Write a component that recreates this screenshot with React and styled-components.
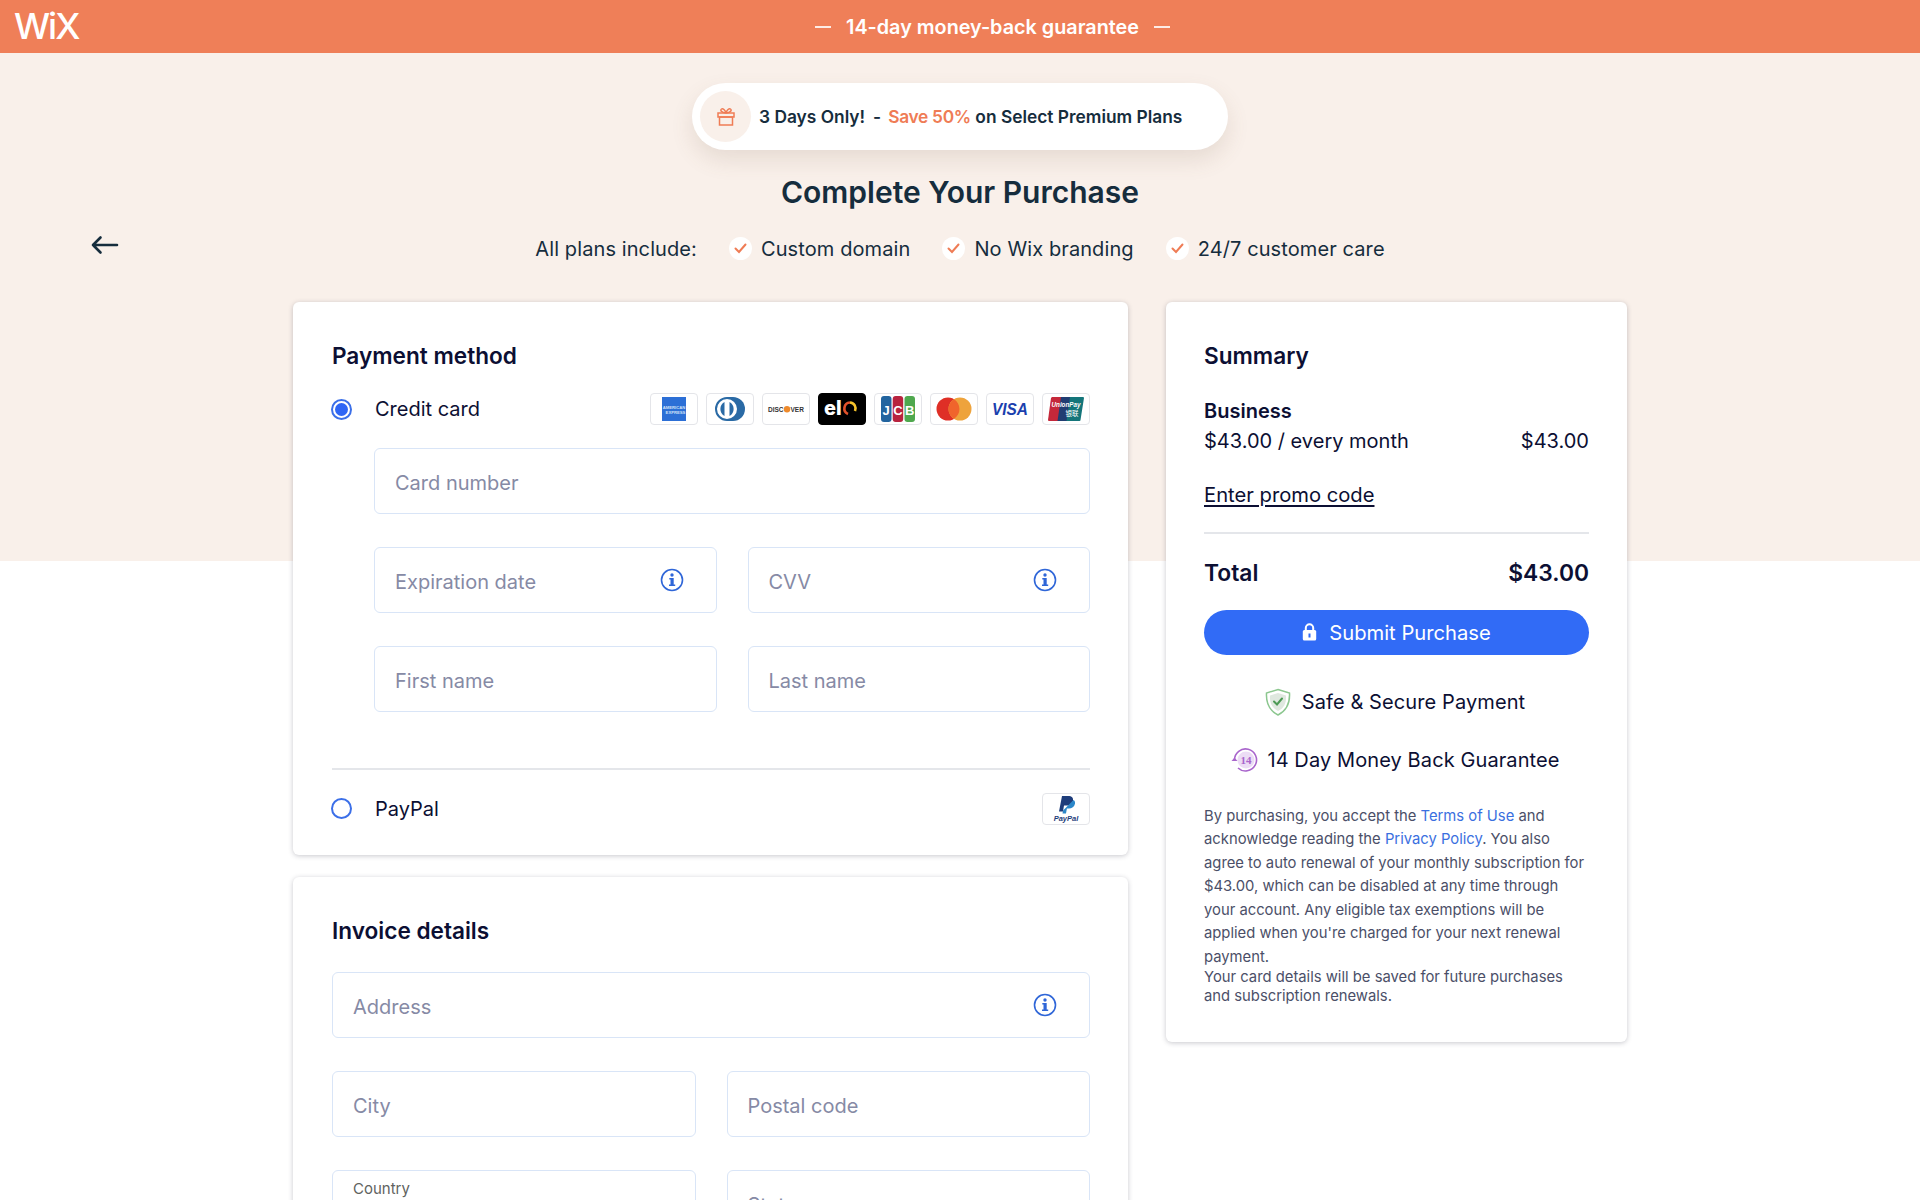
import React from 'react';
import styled, { createGlobalStyle } from 'styled-components';

const GlobalStyle = createGlobalStyle`
  html, body {
    margin: 0;
    padding: 0;
    background: #fff;
  }
  * {
    box-sizing: border-box;
  }
`;

const FONT = `Inter, "Noto Sans", "Liberation Sans", sans-serif`;

const Page = styled.div`
  height: 1200px;
  overflow: hidden;
  font-family: ${FONT};
  color: #162d3d;
  background: linear-gradient(#f9f0ea 561px, #fff 561px);
`;

const TopBar = styled.header`
  height: 53px;
  background: #ef7f58;
  color: #fff;
  display: grid;
  grid-template-columns: 93px 1fr;
  align-items: center;
`;

const Logo = styled.div`
  padding-left: 14px;
  font-size: 36px;
  font-weight: 500;
  letter-spacing: -2px;
  line-height: 53px;
`;

const Guarantee = styled.div`
  display: flex;
  justify-content: center;
  align-items: center;
  gap: 15px;
  padding-right: 28px;
  font-size: 19.800px;
  font-weight: 600;
`;

const Dash = styled.span`
  width: 16px;
  height: 2px;
  background: #fff;
  opacity: 0.85;
`;

const Hero = styled.section`
  display: flex;
  flex-direction: column;
  align-items: center;
`;

const Promo = styled.div`
  margin-top: 30px;
  width: 536px;
  height: 67px;
  border-radius: 34px;
  background: #fff;
  box-shadow: 0 10px 22px rgba(120, 90, 70, 0.14);
  display: flex;
  align-items: center;
  gap: 8px;
  padding-left: 8px;
  font-size: 17.350px;
  font-weight: 600;
  white-space: pre;
`;

const GiftCircle = styled.span`
  width: 51px;
  height: 51px;
  border-radius: 50%;
  background: #f9f0ea;
  display: flex;
  align-items: center;
  justify-content: center;
`;

const Separator = styled.span`
  margin: 0 7px 0 8px;
`;

const Save = styled.span`
  color: #ef7c55;
  letter-spacing: -0.3px;
`;

const Title = styled.h1`
  margin: 24px 0 0;
  font-size: 30px;
  line-height: 36px;
  font-weight: 600;
`;

const Plans = styled.div`
  width: 100%;
  margin-top: 24px;
  display: grid;
  grid-template-columns: 1fr auto 1fr;
  align-items: center;
`;

const BackArrow = styled.span`
  padding-left: 91px;
  display: flex;
  margin-top: -8px;
`;

const PlanList = styled.div`
  display: flex;
  align-items: center;
  font-size: 20px;
  line-height: 30px;
  letter-spacing: 0.1px;
`;

const PlanItem = styled.div`
  margin-left: 32px;
  display: flex;
  align-items: center;
  gap: 9px;
`;

const CheckCircle = styled.span`
  width: 23px;
  height: 23px;
  border-radius: 50%;
  background: #fff;
  display: flex;
  align-items: center;
  justify-content: center;
  margin-top: -2px;
`;

const Columns = styled.main`
  margin-top: 38px;
  display: flex;
  justify-content: center;
  align-items: flex-start;
  gap: 38px;
`;

const LeftColumn = styled.div`
  width: 835px;
  display: flex;
  flex-direction: column;
  gap: 22px;
`;

const Card = styled.section`
  background: #fff;
  border-radius: 6px;
  box-shadow: 0 1px 5px rgba(40, 40, 60, 0.25);
  padding: 40px 38px ${(p) => p.$bottom || 30}px 39px;
`;

const SummaryCard = styled(Card)`
  width: 461px;
  padding-left: 38px;
`;

const CardTitle = styled.h2`
  margin: 0;
  font-size: 22.600px;
  line-height: 28px;
  font-weight: 600;
  color: #0c0f33;
`;

const MethodRow = styled.div`
  display: flex;
  align-items: center;
  margin-top: ${(p) => p.$top}px;
  height: 32px;
  font-size: 20px;
  color: #0c0f33;
`;

const Radio = styled.span`
  width: 21px;
  height: 21px;
  border-radius: 50%;
  border: 2px solid #3b6fe8;
  padding: 2px;
  margin: 0 23px 0 -1px;
  background-clip: content-box;
  background-color: ${(p) => (p.$checked ? '#2f66f5' : 'transparent')};
`;

const Badges = styled.div`
  margin-left: auto;
  display: flex;
  gap: 8px;
`;

const Badge = styled.span`
  width: 48px;
  height: 32px;
  border-radius: 4px;
  border: 1px solid ${(p) => (p.$dark ? '#000' : '#e4e5e9')};
  background: ${(p) => (p.$dark ? '#000' : '#fff')};
  overflow: hidden;
  display: flex;
  align-items: center;
  justify-content: center;
`;

const Fields = styled.div`
  display: flex;
  flex-direction: column;
  gap: 33px;
  margin-top: ${(p) => p.$top}px;
  padding-left: ${(p) => p.$indent || 0}px;
`;

const FieldRow = styled.div`
  display: grid;
  grid-template-columns: minmax(0, 1fr) minmax(0, 1fr);
  gap: 31px;
`;

const Field = styled.label`
  height: 66px;
  border: 1.5px solid #d9e5f7;
  border-radius: 6px;
  background: #fff;
  display: flex;
  align-items: center;
  padding: 4px 32px 0 20px;
`;

const FieldInput = styled.input`
  flex: 1;
  min-width: 0;
  border: 0;
  outline: 0;
  padding: 0;
  background: transparent;
  font-family: ${FONT};
  font-size: 20px;
  color: #0c0f33;

  &::placeholder {
    color: #868aa5;
    opacity: 1;
  }
`;

const SelectField = styled(Field)`
  align-items: flex-start;
  padding-top: 8px;
`;

const SmallLabel = styled.span`
  font-size: 15px;
  line-height: 20px;
  color: #5f6360;
`;

const Divider = styled.hr`
  border: 0;
  height: 1.5px;
  background: #e4e6ea;
  margin: ${(p) => p.$top}px 0 0;
`;

const PlanName = styled.div`
  margin-top: 28px;
  font-size: 20px;
  line-height: 26px;
  font-weight: 600;
  color: #0c0f33;
`;

const PriceRow = styled.div`
  margin-top: 4px;
  display: flex;
  justify-content: space-between;
  font-size: 20px;
  line-height: 26px;
  color: #0c0f33;
`;

const PromoLink = styled.a`
  display: block;
  margin-top: 28px;
  font-size: 20.200px;
  line-height: 26px;
  color: #0c0f33;
  text-decoration: underline;
  text-underline-offset: 3px;
`;

const TotalRow = styled.div`
  margin-top: 23px;
  display: flex;
  justify-content: space-between;
  font-size: 22.800px;
  line-height: 32px;
  font-weight: 600;
  color: #0c0f33;
`;

const SubmitButton = styled.button`
  margin-top: 21px;
  width: 100%;
  height: 45px;
  border: 0;
  border-radius: 23px;
  background: #316bf6;
  color: #fff;
  font-family: ${FONT};
  font-size: 20.200px;
  display: flex;
  align-items: center;
  justify-content: center;
  gap: 12px;
`;

const TrustRow = styled.div`
  margin-top: ${(p) => p.$top}px;
  padding-right: 3px;
  display: flex;
  align-items: center;
  justify-content: center;
  gap: ${(p) => p.$gap}px;
  font-size: 20px;
  letter-spacing: 0.1px;
  line-height: 28px;
  color: #0c0f33;
`;

const Legal = styled.p`
  margin: ${(p) => p.$top || 0}px 0 0;
  font-size: 14.800px;
  line-height: ${(p) => p.$line}px;
  color: #4b4f68;
`;

const LegalLink = styled.a`
  color: #3a6fe0;
`;

function GiftIcon() {
  return (
    <svg width="20" height="20" viewBox="0 0 20 20" fill="none" stroke="#ef7c55" strokeWidth="1.500">
      <rect x="2" y="6" width="16" height="4" />
      <rect x="3.500" y="10" width="13" height="8" />
      <path d="M10 6c-1-3-3-5-4.500-4S5 5.500 10 6zM10 6c1-3 3-5 4.500-4S15 5.500 10 6z" />
    </svg>
  );
}

function CheckIcon() {
  return (
    <svg width="13" height="11" viewBox="0 0 13 11" fill="none" stroke="#ef7c55" strokeWidth="2" strokeLinecap="round">
      <path d="M1.500 5.500l3.500 3.500 6.500-7.500" />
    </svg>
  );
}

function ArrowIcon() {
  return (
    <svg width="28" height="20" viewBox="0 0 28 20" fill="none" stroke="#162d3d" strokeWidth="2.600" strokeLinecap="round" strokeLinejoin="round">
      <path d="M26 10H2M9.500 2.500L2 10l7.500 7.500" />
    </svg>
  );
}

function InfoIcon() {
  return (
    <svg width="24" height="24" viewBox="0 0 24 24" fill="none" style={{ marginTop: -4 }}>
      <circle cx="12" cy="12" r="10.500" stroke="#2f66d8" strokeWidth="1.600" />
      <circle cx="12" cy="7" r="1.700" fill="#2f66d8" />
      <path d="M9.300 10h4.400v6.400h1.500V18H9v-1.600h1.500v-4.800H9.300z" fill="#2f66d8" />
    </svg>
  );
}

function LockIcon() {
  return (
    <svg width="15" height="18" viewBox="0 0 15 18">
      <path d="M3.800 8V5a3.700 3.700 0 0 1 7.400 0v3" fill="none" stroke="#fff" strokeWidth="2" />
      <rect x="0.800" y="7" width="13.400" height="10.500" rx="1.500" fill="#fff" />
      <rect x="6.500" y="10.500" width="2" height="4" fill="#316bf6" />
    </svg>
  );
}

function ShieldIcon() {
  return (
    <svg width="26" height="28" viewBox="0 0 26 28">
      <path d="M13 1.500L24.500 5c.5 9-1.500 17-11.500 22C3 22 1 14 1.500 5z" fill="#fff" stroke="#8cc78f" strokeWidth="1.500" />
      <path d="M13 5l8 2.500c.3 6.500-1 12-8 15.500-7-3.500-8.300-9-8-15.500z" fill="#dfe8df" />
      <path d="M9 13.500l3 3 5-6" fill="none" stroke="#4d9a55" strokeWidth="2" strokeLinecap="round" />
    </svg>
  );
}

function RefundIcon() {
  return (
    <svg width="28" height="26" viewBox="0 0 28 26">
      <circle cx="16" cy="13" r="8.500" fill="#ecdcf5" />
      <path d="M4.500 13A11 11 0 1 1 8 21" fill="none" stroke="#a965cc" strokeWidth="1.600" />
      <path d="M1.500 14L4.500 10.500 7.500 14z" fill="#a965cc" />
      <text x="16" y="17" textAnchor="middle" fontFamily="Liberation Serif, serif" fontSize="11" fontWeight="700" fill="#a965cc">14</text>
    </svg>
  );
}

function AmexLogo() {
  return (
    <svg width="24" height="24" viewBox="0 0 24 24">
      <rect width="24" height="24" fill="#2c6fd6" />
      <text x="12" y="11.500" textAnchor="middle" fontFamily="Liberation Sans, sans-serif" fontSize="4.200" fontWeight="700" fill="#cfe0f7">AMERICAN</text>
      <text x="13.500" y="16.500" textAnchor="middle" fontFamily="Liberation Sans, sans-serif" fontSize="4.200" fontWeight="700" fill="#cfe0f7">EXPRESS</text>
    </svg>
  );
}

function DinersLogo() {
  return (
    <svg width="34" height="24" viewBox="0 0 34 24">
      <path d="M14 0h6a12 12 0 0 1 0 24h-6z" fill="#2a6aa5" />
      <circle cx="14" cy="12" r="11" fill="#fff" stroke="#2a6aa5" strokeWidth="2" />
      <path d="M11.500 5a8 8 0 0 0 0 14zM16.500 5a8 8 0 0 1 0 14z" fill="#2a6aa5" />
    </svg>
  );
}

function DiscoverLogo() {
  return (
    <svg width="38" height="12" viewBox="0 0 38 12">
      <text x="1" y="8.500" fontFamily="Liberation Sans, sans-serif" fontSize="6.500" fontWeight="700" fill="#333">DISC</text>
      <circle cx="20" cy="6.200" r="3.200" fill="#ee8a2c" />
      <text x="23.500" y="8.500" fontFamily="Liberation Sans, sans-serif" fontSize="6.500" fontWeight="700" fill="#333">VER</text>
    </svg>
  );
}

function EloLogo() {
  return (
    <svg width="40" height="24" viewBox="0 0 40 24" fill="none">
      <text x="2" y="18" fontFamily="Inter, sans-serif" fontSize="20" fontWeight="800" fill="#fff">el</text>
      <path d="M26 17a6 6 0 0 1 2-11.500" stroke="#e2512b" strokeWidth="2.600" />
      <path d="M28 5.500a6 6 0 0 1 5 8.500" stroke="#f6c32c" strokeWidth="2.600" />
    </svg>
  );
}

function JcbLogo() {
  return (
    <svg width="34" height="26" viewBox="0 0 34 26">
      <rect x="0" width="10.500" height="26" rx="3" fill="#22649f" />
      <rect x="11.700" width="10.500" height="26" rx="3" fill="#b8233f" />
      <rect x="23.500" width="10.500" height="26" rx="3" fill="#4fa84e" />
      <text x="5.200" y="19" textAnchor="middle" fontFamily="Liberation Sans, sans-serif" fontSize="13" fontWeight="700" fill="#fff">J</text>
      <text x="17" y="19" textAnchor="middle" fontFamily="Liberation Sans, sans-serif" fontSize="13" fontWeight="700" fill="#fff">C</text>
      <text x="28.700" y="19" textAnchor="middle" fontFamily="Liberation Sans, sans-serif" fontSize="13" fontWeight="700" fill="#fff">B</text>
    </svg>
  );
}

function MastercardLogo() {
  return (
    <svg width="36" height="24" viewBox="0 0 36 24">
      <circle cx="12" cy="12" r="11.500" fill="#df2f26" />
      <circle cx="24" cy="12" r="11.500" fill="#eea33c" />
      <path d="M18 2.200a11.500 11.500 0 0 1 0 19.600 11.500 11.500 0 0 1 0-19.600z" fill="#f0642c" />
    </svg>
  );
}

function VisaLogo() {
  return (
    <svg width="36" height="16" viewBox="0 0 36 16">
      <text x="0" y="13.500" fontFamily="Liberation Sans, sans-serif" fontSize="16" fontWeight="700" fontStyle="italic" fill="#1b3fae" textLength="36" lengthAdjust="spacingAndGlyphs">VISA</text>
    </svg>
  );
}

function UnionPayLogo() {
  return (
    <svg width="36" height="24" viewBox="0 0 36 24">
      <path d="M4 0h12l-3.500 24H1a1 1 0 0 1-1-1L3 1z" fill="#c5283a" />
      <path d="M13 0h12l-3.500 24H9.500z" fill="#213d72" />
      <path d="M22 0h13a1 1 0 0 1 1 1l-3.500 22a1 1 0 0 1-1 1H18.500z" fill="#14757a" />
      <text x="18" y="10" textAnchor="middle" fontFamily="Liberation Sans, sans-serif" fontSize="7" fontWeight="700" fontStyle="italic" fill="#fff" textLength="29" lengthAdjust="spacingAndGlyphs">UnionPay</text>
      <text x="24" y="19" textAnchor="middle" fontFamily="Noto Sans CJK SC, sans-serif" fontSize="6.500" fill="#fff">银联</text>
    </svg>
  );
}

function PayPalLogo() {
  return (
    <svg width="30" height="28" viewBox="0 0 30 28">
      <path d="M11 1h6c4 0 5.500 2 5 4.500-.6 3.500-3 5-6.500 5H13l-1 6H8z" fill="#1e3d7b" />
      <path d="M22.500 5c1.500 1 1.800 2.500 1.400 4-.7 3-3 4.400-6 4.400h-2l-.9 5.100h-3.500l.6-3" fill="#2b87c9" />
      <text x="15" y="26" textAnchor="middle" fontFamily="Liberation Sans, sans-serif" fontSize="7.500" fontWeight="700" fontStyle="italic" fill="#1e3d7b">PayPal</text>
    </svg>
  );
}

const cardLogos = [
  { id: 'amex', logo: <AmexLogo /> },
  { id: 'diners', logo: <DinersLogo /> },
  { id: 'discover', logo: <DiscoverLogo /> },
  { id: 'elo', logo: <EloLogo />, dark: true },
  { id: 'jcb', logo: <JcbLogo /> },
  { id: 'mc', logo: <MastercardLogo /> },
  { id: 'visa', logo: <VisaLogo /> },
  { id: 'unionpay', logo: <UnionPayLogo /> },
];

function TextField({ placeholder, info }) {
  return (
    <Field>
      <FieldInput placeholder={placeholder} />
      {info && <InfoIcon />}
    </Field>
  );
}

export default function App() {
  return (
    <Page>
      <GlobalStyle />
      <TopBar>
        <Logo>WiX</Logo>
        <Guarantee>
          <Dash />
          14-day money-back guarantee
          <Dash />
        </Guarantee>
      </TopBar>

      <Hero>
        <Promo>
          <GiftCircle><GiftIcon /></GiftCircle>
          <span>3 Days Only!<Separator>-</Separator><Save>Save 50%</Save> on Select Premium Plans</span>
        </Promo>
        <Title>Complete Your Purchase</Title>
        <Plans>
          <BackArrow><ArrowIcon /></BackArrow>
          <PlanList>
            All plans include:
            <PlanItem><CheckCircle><CheckIcon /></CheckCircle>Custom domain</PlanItem>
            <PlanItem><CheckCircle><CheckIcon /></CheckCircle>No Wix branding</PlanItem>
            <PlanItem><CheckCircle><CheckIcon /></CheckCircle>24/7 customer care</PlanItem>
          </PlanList>
        </Plans>
      </Hero>

      <Columns>
        <LeftColumn>
          <Card>
            <CardTitle>Payment method</CardTitle>
            <MethodRow $top={23}>
              <Radio $checked />
              Credit card
              <Badges>
                {cardLogos.map((c) => (
                  <Badge key={c.id} $dark={c.dark}>{c.logo}</Badge>
                ))}
              </Badges>
            </MethodRow>
            <Fields $top={23} $indent={42}>
              <TextField placeholder="Card number" />
              <FieldRow>
                <TextField placeholder="Expiration date" info />
                <TextField placeholder="CVV" info />
              </FieldRow>
              <FieldRow>
                <TextField placeholder="First name" />
                <TextField placeholder="Last name" />
              </FieldRow>
            </Fields>
            <Divider $top={56} />
            <MethodRow $top={23}>
              <Radio />
              PayPal
              <Badges>
                <Badge><PayPalLogo /></Badge>
              </Badges>
            </MethodRow>
          </Card>

          <Card>
            <CardTitle>Invoice details</CardTitle>
            <Fields $top={27}>
              <TextField placeholder="Address" info />
              <FieldRow>
                <TextField placeholder="City" />
                <TextField placeholder="Postal code" />
              </FieldRow>
              <FieldRow>
                <SelectField><SmallLabel>Country</SmallLabel></SelectField>
                <TextField placeholder="State" />
              </FieldRow>
            </Fields>
          </Card>
        </LeftColumn>

        <SummaryCard $bottom={36}>
          <CardTitle>Summary</CardTitle>
          <PlanName>Business</PlanName>
          <PriceRow>
            <span>$43.00 / every month</span>
            <span>$43.00</span>
          </PriceRow>
          <PromoLink>Enter promo code</PromoLink>
          <Divider $top={24} />
          <TotalRow>
            <span>Total</span>
            <span>$43.00</span>
          </TotalRow>
          <SubmitButton><LockIcon />Submit Purchase</SubmitButton>
          <TrustRow $top={33} $gap={11}><ShieldIcon />Safe &amp; Secure Payment</TrustRow>
          <TrustRow $top={30} $gap={9}><RefundIcon />14 Day Money Back Guarantee</TrustRow>
          <Legal $top={31} $line={23.500}>
            By purchasing, you accept the <LegalLink>Terms of Use</LegalLink> and acknowledge reading the <LegalLink>Privacy Policy</LegalLink>. You also agree to auto renewal of your monthly subscription for $43.00, which can be disabled at any time through your account. Any eligible tax exemptions will be applied when you're charged for your next renewal payment.
          </Legal>
          <Legal $top={-1} $line={19}>
            Your card details will be saved for future purchases and subscription renewals.
          </Legal>
        </SummaryCard>
      </Columns>
    </Page>
  );
}
